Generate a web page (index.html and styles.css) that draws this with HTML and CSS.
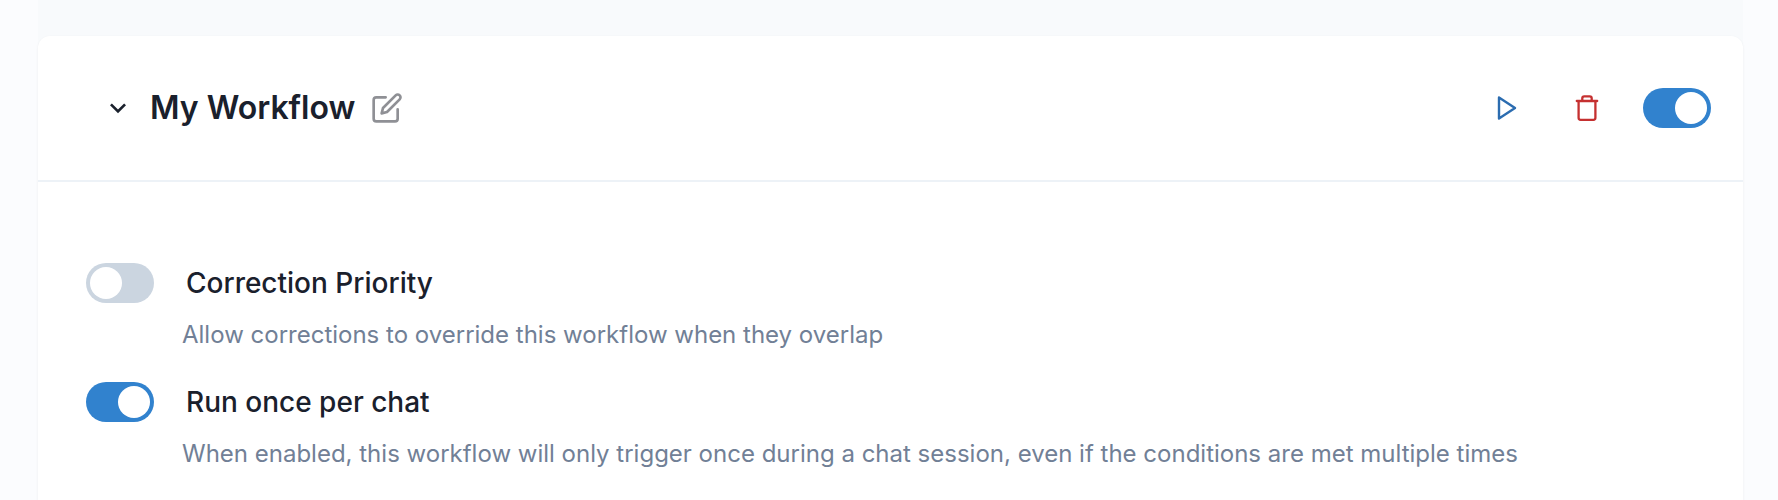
FILE: index.html
```html
<!DOCTYPE html>
<html lang="en">
<head>
<meta charset="utf-8">
<title>My Workflow</title>
<link rel="stylesheet" href="styles.css">
</head>
<body>
<main class="page">
<section class="card">
<header class="header">
<svg class="chevron" viewBox="0 0 24 24"><path d="M16.59 8.59L12 13.17 7.41 8.59 6 10l6 6 6-6z"/></svg>
<h1 class="title">My Workflow</h1>
<svg class="edit" viewBox="0 0 24 24"><path d="M11 4H4a2 2 0 0 0-2 2v14a2 2 0 0 0 2 2h14a2 2 0 0 0 2-2v-7"/><path d="M18.5 2.5a2.121 2.121 0 0 1 3 3L12 15l-4 1 1-4 9.5-9.5z"/></svg>
<div class="actions">
<svg class="play" viewBox="0 0 28 28"><path d="M7 3.4L23 14 7 24.6z"/></svg>
<svg class="trash" viewBox="0 0 28 28"><path d="M3.8 7h20.4M5.6 7v16.8a2 2 0 0 0 2 2h12.8a2 2 0 0 0 2-2V7M9.3 7V4.3a2 2 0 0 1 2-2h5.4a2 2 0 0 1 2 2V7"/></svg>
<span class="switch on"></span>
</div>
</header>
<div class="settings">
<div class="setting"><span class="switch"></span><span class="label">Correction Priority</span></div>
<p class="help">Allow corrections to override this workflow when they overlap</p>
<div class="setting"><span class="switch on"></span><span class="label">Run once per chat</span></div>
<p class="help">When enabled, this workflow will only trigger once during a chat session, even if the conditions are met multiple times</p>
</div>
</section>
</main>
</body>
</html>
```
FILE: styles.css
```css
* { box-sizing: border-box; }
body { margin: 0; height: 500px; overflow: hidden; background: #fbfcfe; font-family: Inter, sans-serif; color: #1a202c; }
.page { margin: 0 35px 0 38px; padding-top: 36px; height: 500px; background: #f8fafc; }
.card { height: 480px; background: #fff; border-radius: 12px 12px 0 0; box-shadow: 0 1px 3px rgba(0,0,0,.06); }
.header { height: 146px; display: flex; align-items: center; padding: 0 32px 0 64px; border-bottom: 2px solid #edf2f7; }
svg { flex: none; fill: none; stroke: currentColor; stroke-width: 2; stroke-linecap: round; stroke-linejoin: round; }
.chevron { width: 32px; height: 32px; fill: currentColor; stroke: none; }
.title { margin: 0 16px; font-size: 32px; font-weight: 600; line-height: 48px; white-space: nowrap; }
.edit { width: 32px; height: 32px; color: #8f9095; }
.actions { margin-left: auto; display: flex; align-items: center; }
.play { width: 28px; height: 28px; color: #2b6cb0; stroke-width: 2.4; margin-right: 53px; }
.trash { width: 28px; height: 28px; color: #c53030; stroke-width: 2.3; margin-right: 42px; }
.switch { flex: none; width: 68px; height: 40px; padding: 4px; border-radius: 20px; background: #cbd5e0; display: flex; }
.switch::before { content: ""; width: 32px; height: 32px; border-radius: 50%; background: #fff; }
.on { background: #3182ce; justify-content: flex-end; }
.settings { padding: 81px 48px 0; }
.setting { display: flex; align-items: center; height: 40px; }
.label { margin-left: 32px; font-size: 28px; font-weight: 500; }
.help { margin: 14px 0 29px 96px; font-size: 24px; line-height: 36px; color: #718096; white-space: nowrap; }
```
